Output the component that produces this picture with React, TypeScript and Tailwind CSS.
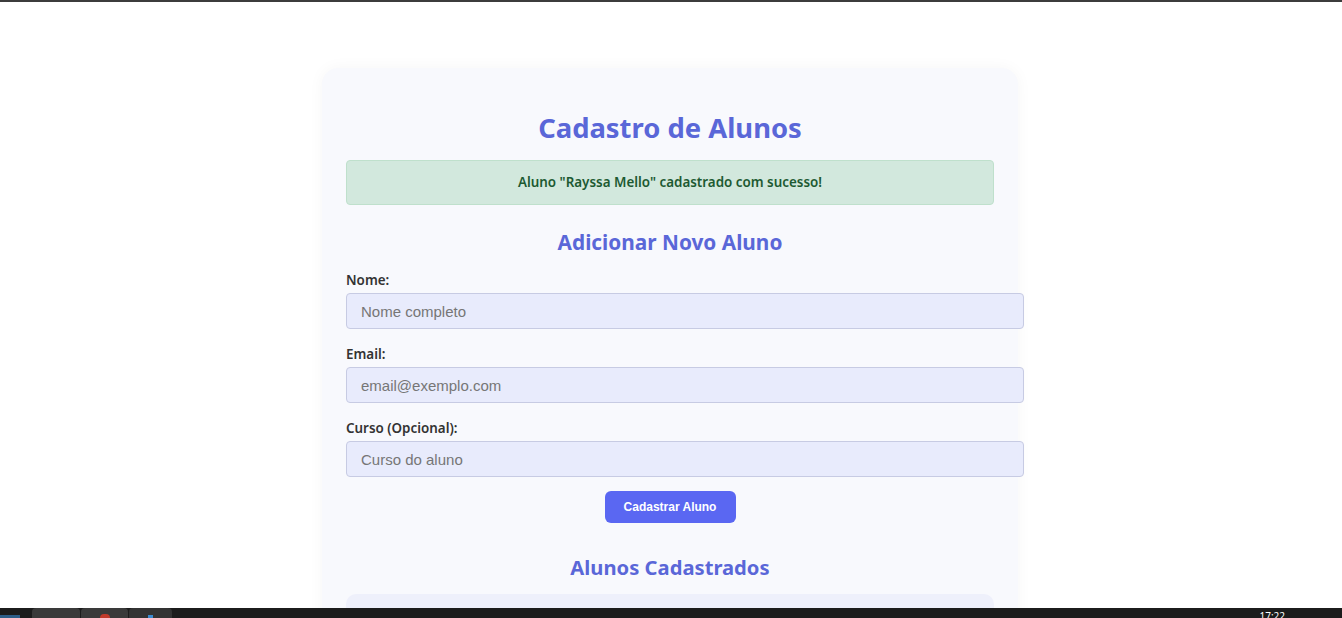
import React from 'react';

const fields = [
  { label: 'Nome:', placeholder: 'Nome completo', type: 'text' },
  { label: 'Email:', placeholder: 'email@exemplo.com', type: 'email' },
  { label: 'Curso (Opcional):', placeholder: 'Curso do aluno', type: 'text' },
];

const Taskbar: React.FC = () => (
  <div className="fixed bottom-0 left-0 right-0 h-[10px] overflow-hidden bg-[#1c1c1c] flex items-start">
    <div className="w-[22px] h-[10px] flex items-end">
      <div className="w-[20px] h-[3px] bg-[#3a8ad0] opacity-60" />
    </div>
    <div className="ml-[10px] w-[48px] h-[10px] rounded-t-[4px] bg-[#3a3a3a]" />
    <div className="ml-[1px] w-[47px] h-[10px] rounded-t-[4px] bg-[#3a3a3a] flex justify-center">
      <div className="mt-[6px] w-[10px] h-[4px] rounded-t-full bg-[#c0392b]" />
    </div>
    <div className="ml-[1px] w-[43px] h-[10px] rounded-t-[4px] bg-[#333] flex justify-center">
      <div className="mt-[7px] w-[5px] h-[3px] bg-[#3a8ad0]" />
    </div>
    <div className="ml-auto mr-[57px] text-[10px] leading-none text-white mt-[3px]">17:22</div>
  </div>
);

export default function App() {
  return (
    <div className="h-screen overflow-hidden bg-white font-['Noto_Sans',sans-serif]">
      <div className="h-[2px] bg-[#3c3c3c]" />
      <div className="pr-[2px]">
        <div className="mx-auto mt-[66px] w-[696px] rounded-[16px] bg-[#f8f9fd] px-[24px] pt-[43px] pb-[40px] shadow-[0_0_16px_rgba(0,0,0,0.04)]">
          <h1 className="h-[34px] text-center text-[27.4px] font-bold leading-[34px] text-[#5a67d8]">
            Cadastro de Alunos
          </h1>
          <div className="mt-[15px] flex h-[45px] items-center justify-center rounded-[4px] border border-[#bfe0cc] bg-[#d2e8dd] text-[13.4px] font-semibold text-[#1d5a32]">
            Aluno "Rayssa Mello" cadastrado com sucesso!
          </div>
          <h2 className="mt-[23px] h-[28px] text-center text-[20.8px] font-bold leading-[28px] text-[#5a67d8]">
            Adicionar Novo Aluno
          </h2>
          <form className="flex flex-col" onSubmit={(e) => e.preventDefault()}>
            {fields.map((f, i) => (
              <div key={f.label} className={i === 0 ? 'mt-[15px]' : 'mt-[16px]'}>
                <label className="block h-[18px] text-[13.4px] font-semibold leading-[18px] text-[#333]">
                  {f.label}
                </label>
                <input
                  type={f.type}
                  placeholder={f.placeholder}
                  className="mt-[4px] block h-[36px] w-[678px] rounded-[4px] border border-[#c7cbe3] bg-[#e8ebfc] px-[14px] font-['Liberation_Sans',Arial,sans-serif] text-[15px] text-[#333] placeholder:text-[#767676] outline-none"
                />
              </div>
            ))}
            <div className="mt-[14px] flex justify-center">
              <button
                type="submit"
                className="h-[32px] w-[131px] rounded-[6px] bg-[#5a67f2] font-['Liberation_Sans',Arial,sans-serif] text-[12px] font-bold text-white"
              >
                Cadastrar Aluno
              </button>
            </div>
          </form>
          <h2 className="mt-[30px] h-[28px] text-center text-[20.2px] font-bold leading-[28px] text-[#5a67d8]">
            Alunos Cadastrados
          </h2>
          <div className="mt-[13px] h-[80px] rounded-[10px] bg-[#eef0fb]" />
        </div>
      </div>
      <Taskbar />
    </div>
  );
}
